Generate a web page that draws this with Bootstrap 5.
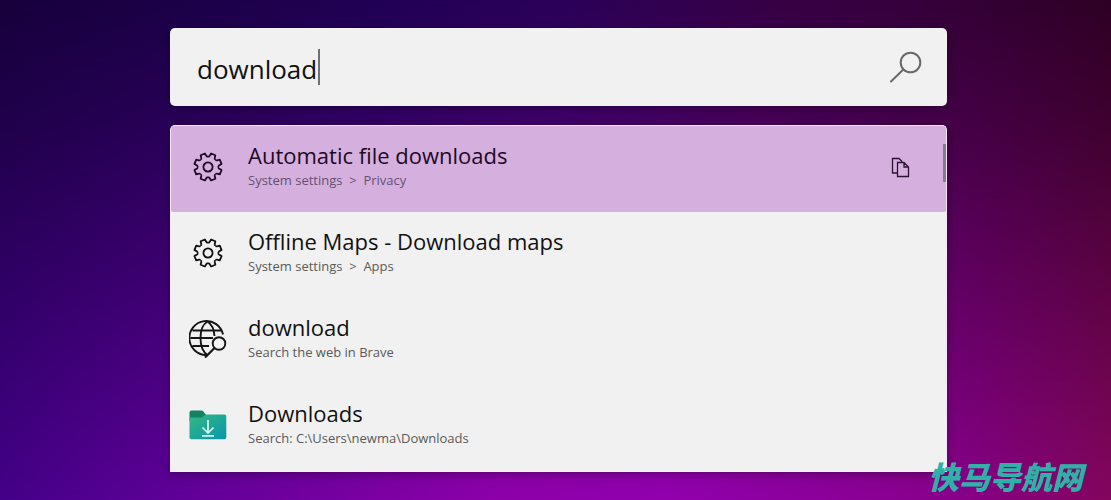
<!DOCTYPE html>
<html lang="en">
<head>
<meta charset="utf-8">
<meta name="viewport" content="width=device-width, initial-scale=1">
<title>Launcher search</title>
<link href="https://cdn.jsdelivr.net/npm/bootstrap@5.3.0/dist/css/bootstrap.min.css" rel="stylesheet">
<style>
  body {
    font-family: "Open Sans", "Noto Sans", sans-serif;
    background: linear-gradient(90deg, #440088 0%, #5e0098 15%, #8e00aa 45%, #9200ae 60%, #88008a 86%, #84065e 100%);
  }
  body::before {
    content: "";
    position: absolute;
    inset: 0;
    background: linear-gradient(90deg, #17003c 0%, #200054 35%, #2a0058 50%, #360044 70%, #340038 85%, #2e0024 100%);
    -webkit-mask-image: linear-gradient(#000 0%, rgba(0,0,0,.8) 25%, transparent 100%);
    mask-image: linear-gradient(#000 0%, rgba(0,0,0,.8) 25%, transparent 100%);
  }
  .launcher { padding: 28px 164px 28px 170px; }
  .panel { background: #f1f1f1; box-shadow: 0 2px 10px rgba(0,0,0,.3); }
  .search-box { height: 78px; margin-bottom: 19px; border-radius: 5px; padding: 0 24px 0 27px; }
  .search-box input { font-size: 26px; line-height: 36px; color: #111; outline: 0; min-width: 0; padding: 4px 0 0; }
  .text-caret { left: 148px; top: 21px; width: 2px; height: 36px; background: #707070; }
  .results { border: 1px solid #f6e8fb; border-bottom-color: #f1f1f1; border-radius: 5px 5px 0 0; padding-bottom: 1px; }
  .result { height: 86px; padding: 0 35px 5px 18px; color: #111; }
  .result.selected { background: #d5b0df; color: #1c0a24; border-radius: 4px 4px 2px 2px; }
  .result-icon { width: 38px; height: 38px; margin-right: 21px; }
  .result-text { padding-bottom: 3px; }
  .result-title { font-size: 22px; line-height: 29px; }
  .result-path { font-size: 13px; line-height: 20px; color: #5a5a5a; white-space: pre; }
  .selected .result-path { color: #655070; }
  .thumb { right: 0; top: 18px; width: 3px; height: 38px; background: #89788f; }
  .watermark { right: 28px; bottom: 2px; font: italic 900 31px/44px "Noto Sans CJK SC", sans-serif; color: #30b0a8; }
</style>
</head>
<body class="min-vh-100 position-relative">
<svg class="position-absolute" width="0" height="0" aria-hidden="true">
  <defs>
    <path id="tooth" d="M-4.13-9.98C-3.5-9.7-3-10-2.8-10.8L-2.3-13.7H2.3L2.8-10.8C3-10 3.5-9.7 4.13-9.98"/>
    <symbol id="gear" viewBox="-19 -19 38 38">
      <g fill="none" stroke="currentColor" stroke-width="1.8" stroke-linejoin="round">
        <circle r="4.6"/>
        <use href="#tooth" transform="rotate(22.5)"/><use href="#tooth" transform="rotate(67.5)"/>
        <use href="#tooth" transform="rotate(112.5)"/><use href="#tooth" transform="rotate(157.5)"/>
        <use href="#tooth" transform="rotate(202.5)"/><use href="#tooth" transform="rotate(247.5)"/>
        <use href="#tooth" transform="rotate(292.5)"/><use href="#tooth" transform="rotate(337.5)"/>
      </g>
    </symbol>
    <linearGradient id="folder" x1="0" y1="0" x2="1" y2="1">
      <stop offset="0" stop-color="#35b781"/><stop offset="1" stop-color="#0997ac"/>
    </linearGradient>
  </defs>
</svg>
<main class="launcher position-relative">
  <form class="search-box panel position-relative d-flex align-items-center" onsubmit="return false">
    <input class="flex-grow-1 border-0 bg-transparent" type="text" value="download" aria-label="Search">
    <span class="text-caret position-absolute"></span>
    <button class="btn p-0 border-0 d-flex" type="submit" aria-label="Run search">
      <svg width="34" height="34" viewBox="0 0 34 34" fill="none" stroke="#696969" stroke-width="2" stroke-linecap="round"><circle cx="21.500" cy="12.500" r="9.800"/><path d="M14.300 19.500 2 31.500"/></svg>
    </button>
  </form>
  <div class="results panel position-relative">
    <div class="result selected d-flex align-items-center">
      <a class="d-flex align-items-center flex-grow-1 text-reset text-decoration-none" href="#privacy">
        <svg class="result-icon"><use href="#gear"/></svg>
        <span class="result-text"><span class="result-title d-block">Automatic file downloads</span><span class="result-path d-block">System settings  &gt;  Privacy</span></span>
      </a>
      <button class="btn p-0 border-0 d-flex" type="button" aria-label="Copy path">
        <svg width="21" height="22" viewBox="0 0 21 22" fill="none" stroke="#2a1233" stroke-width="1.300"><path d="M7.500 17H2.500V2.500H9L12 5.500M7.500 6.500H14L18.500 11V20.500H7.500ZM14 6.500V11H18.500"/></svg>
      </button>
    </div>
    <a class="result d-flex align-items-center text-decoration-none" href="#apps">
      <svg class="result-icon"><use href="#gear"/></svg>
      <span class="result-text"><span class="result-title d-block">Offline Maps - Download maps</span><span class="result-path d-block">System settings  &gt;  Apps</span></span>
    </a>
    <a class="result d-flex align-items-center text-decoration-none" href="#web">
      <svg class="result-icon" viewBox="0 0 38 38" fill="none" stroke="#151515" stroke-width="1.900">
        <path d="M34 14.500A17 17 0 1 0 17 35M18.500 35C14 32 11.500 26 11.500 18S14 4 18.500 1.500C22.500 4 25 9 25.500 16M3.500 10.500H32.500M1.500 18H24M3.500 26H20"/>
        <circle cx="30" cy="23.500" r="6.300"/><path d="M25.500 28 16 37.500" stroke-width="2.200"/>
      </svg>
      <span class="result-text"><span class="result-title d-block">download</span><span class="result-path d-block">Search the web in Brave</span></span>
    </a>
    <a class="result d-flex align-items-center text-decoration-none" href="#downloads">
      <svg class="result-icon" viewBox="0 0 38 38">
        <path fill="#128260" d="M.5 6.500Q.5 4.500 2.500 4.500H12.500Q13.700 4.500 14.500 5.500L17 9V15H.5Z"/>
        <path fill="url(#folder)" d="M.5 11.500H12Q13.500 11.500 14.500 10.300L15.500 9.200Q16.300 8.500 17.500 8.500H35.500Q37.300 8.500 37.300 10.300V31.500Q37.300 33.300 35.500 33.300H2.300Q.5 33.300 .5 31.500Z"/>
        <path d="M19 14V26M13.500 21.500 19 27 24.500 21.500M13 29.800H25" fill="none" stroke="#d9fbf2" stroke-width="1.700"/>
      </svg>
      <span class="result-text"><span class="result-title d-block">Downloads</span><span class="result-path d-block">Search: C:\Users\newma\Downloads</span></span>
    </a>
    <span class="thumb position-absolute"></span>
  </div>
</main>
<div class="watermark position-absolute" lang="zh-CN">快马导航网</div>
<script src="https://cdn.jsdelivr.net/npm/bootstrap@5.3.0/dist/js/bootstrap.bundle.min.js"></script>
</body>
</html>
